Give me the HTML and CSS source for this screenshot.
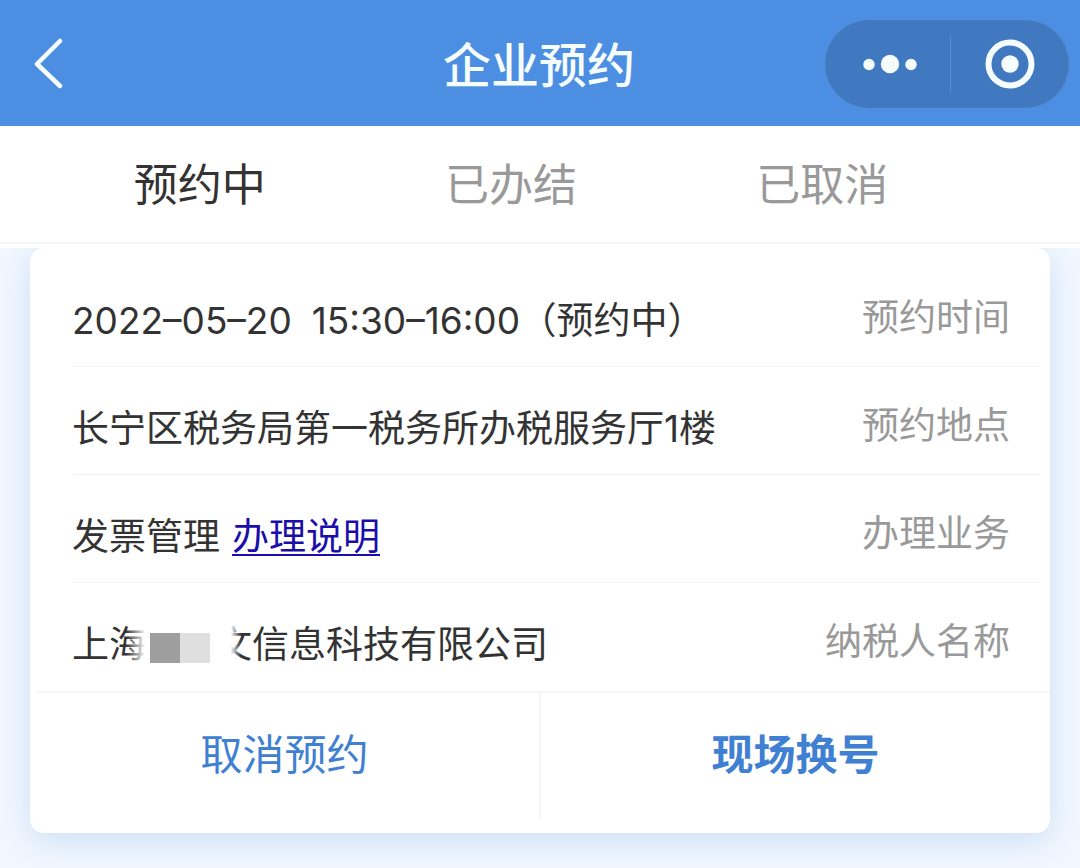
FILE: index.html
```html
<!DOCTYPE html>
<html lang="zh-CN">
<head>
<meta charset="utf-8">
<meta name="viewport" content="width=device-width, initial-scale=1">
<title>企业预约</title>
<link rel="stylesheet" href="styles.css">
</head>
<body class="page">
<header class="header">
  <button class="icon-button back" type="button" aria-label="返回">
    <svg width="32" height="52" viewBox="0 0 32 52" fill="none" stroke="currentColor" stroke-width="4.5" stroke-linecap="round" stroke-linejoin="round"><path d="M28 3 5 26l23 22"/></svg>
  </button>
  <h1 class="title">企业预约</h1>
  <div class="capsule">
    <button class="icon-button capsule-button" type="button" aria-label="更多">
      <svg width="54" height="20" viewBox="0 0 54 20" fill="currentColor"><circle cx="6" cy="10.500" r="5.700"/><circle cx="27" cy="10" r="9.200"/><circle cx="48" cy="10.500" r="5.700"/></svg>
    </button>
    <button class="icon-button capsule-button" type="button" aria-label="关闭">
      <svg width="50" height="50" viewBox="0 0 50 50"><circle cx="25" cy="25" r="21.500" fill="none" stroke="currentColor" stroke-width="6"/><circle cx="25" cy="25" r="8.700" fill="currentColor"/></svg>
    </button>
  </div>
</header>
<nav class="tabs">
  <button class="tab tab-active" type="button">预约中</button>
  <button class="tab" type="button">已办结</button>
  <button class="tab" type="button">已取消</button>
</nav>
<main class="content">
  <section class="card">
    <dl class="details">
      <div class="row"><dt class="label">预约时间</dt><dd class="value"><span>2022–05–20</span><span class="time">15:30–16:00</span><span class="status">（预约中）</span></dd></div>
      <div class="row"><dt class="label">预约地点</dt><dd class="value">长宁区税务局第一税务所办税服务厅1楼</dd></div>
      <div class="row"><dt class="label">办理业务</dt><dd class="value">发票管理<a class="help" href="#help">办理说明</a></dd></div>
      <div class="row"><dt class="label">纳税人名称</dt><dd class="value">上海<span class="mask"></span>文信息科技有限公司</dd></div>
    </dl>
    <div class="actions">
      <button class="action" type="button">取消预约</button>
      <button class="action action-primary" type="button">现场换号</button>
    </div>
  </section>
</main>
</body>
</html>
```
FILE: styles.css
```css
* { box-sizing: border-box; }

.page {
  margin: 0;
  min-height: 100vh;
  background: #f1f7fe;
  color: #333;
  font-family: Inter, "Noto Sans CJK SC", sans-serif;
}

button {
  border: 0;
  padding: 0;
  background: none;
  color: inherit;
  font: inherit;
  cursor: pointer;
}

.header {
  display: grid;
  grid-template-columns: 1fr auto 1fr;
  align-items: center;
  height: 126px;
  padding: 2px 10px 0 32px;
  background: #4c8ee2;
  color: #f5fdff;
}

.icon-button {
  display: flex;
  align-items: center;
  justify-content: center;
}

.back { justify-self: start; }

.title {
  margin: 0 0 0 -24px;
  padding-top: 4px;
  font-size: 48px;
  line-height: 72px;
  font-weight: 500;
}

.capsule {
  display: flex;
  justify-self: end;
  align-items: center;
  width: 246px;
  height: 90px;
  border: 1px solid #5590d6;
  border-radius: 45px;
  background: #4079bf;
}

.capsule-button {
  flex: 1;
  height: 56px;
}

.capsule-button:first-child {
  padding-left: 6px;
  border-right: 1px solid #5b91d3;
}

.tabs {
  display: flex;
  padding: 0 102px 0 44px;
  border-bottom: 2px solid #f6f6f7;
  background: #fff;
}

.tab {
  flex: 1;
  height: 116px;
  padding-bottom: 5px;
  color: #999;
  font-size: 44px;
}

.tab-active { color: #333; }

.content {
  padding: 0 30px 36px;
  border-top: 4px solid #fff;
}

.card {
  padding-top: 11px;
  border-radius: 14px;
  background: #fff;
  box-shadow: 0 8px 32px #cddff5;
  clip-path: inset(0 -30px -36px);
}

.details {
  margin: 0;
  padding: 0 10px 0 43px;
}

.row {
  display: flex;
  flex-direction: row-reverse;
  justify-content: space-between;
  align-items: flex-start;
  height: 108px;
  padding: 33px 30px 0 0;
  border-bottom: 1px solid #f3f3f4;
  font-size: 37px;
  line-height: 52px;
}

.row:last-child { border-bottom: 0; }

.label { color: #999; }

.value {
  margin: 0 0 0 -1px;
  padding-top: 3px;
}

.time { margin-left: 20px; }

.status {
  margin-left: 18px;
  font-feature-settings: "halt";
}

.help {
  margin-left: 12px;
  color: #1a0dab;
  text-decoration-thickness: 2px;
  text-underline-offset: 4px;
}

.mask {
  position: relative;
  display: inline-block;
  width: 69px;
  height: 30px;
  vertical-align: -5px;
  background: linear-gradient(90deg, #9e9e9e 50%, #dfdfdf 50%) 4px 0 / 60px 30px no-repeat;
}

.mask::before,
.mask::after {
  content: "";
  position: absolute;
  top: -10px;
  width: 20px;
  height: 48px;
}

.mask::before {
  right: 100%;
  background: linear-gradient(90deg, transparent, #fff);
}

.mask::after {
  left: 100%;
  width: 26px;
  background: linear-gradient(90deg, #fff 60%, transparent);
}

.actions {
  display: flex;
  flex-wrap: wrap;
  padding-bottom: 14px;
}

.actions::before {
  content: "";
  flex: 0 0 100%;
  height: 2px;
  background: linear-gradient(#f5f5f6, #f5f5f6) 7px 0 no-repeat;
}

.action {
  flex: 1;
  height: 126px;
  padding-bottom: 9px;
  color: #3f80d3;
  font-size: 42px;
}

.action:first-child { border-right: 2px solid #f5f5f6; }

.action-primary { font-weight: 700; }
```
